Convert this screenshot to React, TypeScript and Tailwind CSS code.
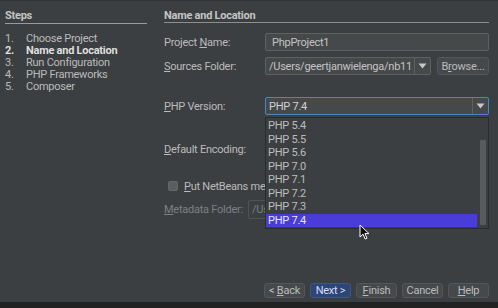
import React from "react";

// NetBeans "New PHP Project" wizard, step 2 (Darcula look-and-feel).

const steps = [
  { n: "1.", label: "Choose Project" },
  { n: "2.", label: "Name and Location", current: true },
  { n: "3.", label: "Run Configuration" },
  { n: "4.", label: "PHP Frameworks" },
  { n: "5.", label: "Composer" },
];

const versions = ["PHP 5.4", "PHP 5.5", "PHP 5.6", "PHP 7.0", "PHP 7.1", "PHP 7.2", "PHP 7.3", "PHP 7.4"];

// Label with one underlined mnemonic letter.
function Mn({ text, at }: { text: string; at: number }) {
  return (
    <>
      {text.slice(0, at)}
      <span className="underline underline-offset-1">{text[at]}</span>
      {text.slice(at + 1)}
    </>
  );
}

function Arrow() {
  return (
    <svg width="9" height="6" viewBox="0 0 9 6">
      <path d="M0.5 0.5 H8.5 L4.5 5.5 Z" fill="#c8c8c8" />
    </svg>
  );
}

function WizButton({ children, primary }: { children: React.ReactNode; primary?: boolean }) {
  return (
    <div
      className={`w-[41px] h-[15px] flex items-center justify-center rounded-[3px] border ${
        primary
          ? "bg-[#2d4674] border-[#3b5687] text-[#d6dcff]"
          : "bg-[#45494b] border-[#53575a] text-[#bbbbbb]"
      }`}
    >
      {children}
    </div>
  );
}

export default function App() {
  return (
    <div
      className="relative w-[498px] h-[308px] bg-[#3c3f41] flex flex-col text-[11px] leading-[13px] tracking-[-0.25px] text-[#bbbbbb] overflow-hidden"
      style={{ fontFamily: "Roboto, 'Liberation Sans', sans-serif" }}
    >
      <div className="h-px bg-[#323436]" />
      <div className="flex flex-1 min-h-0">
        {/* Steps */}
        <div className="w-[151px] shrink-0 pl-[5px] pr-[4px] pt-[8px]">
          <div className="font-bold text-[#c4c4c4]">Steps</div>
          <div className="h-px bg-[#9a9a9a] mt-[1px]" />
          <div className="mt-[8px] flex flex-col">
            {steps.map((s) => (
              <div key={s.n} className={`flex h-[12px] items-center ${s.current ? "font-bold text-[#dedede]" : ""}`}>
                <span className="w-[21px]">{s.n}</span>
                <span>{s.label}</span>
              </div>
            ))}
          </div>
        </div>

        {/* Name and Location */}
        <div className="flex-1 min-w-0 pl-[13px] pr-[9px] pt-[8px]">
          <div className="font-bold text-[#c4c4c4]">Name and Location</div>
          <div className="h-px bg-[#8e8e8e]" />

          <div className="mt-[10px] flex items-center h-[18px]">
            <span className="w-[101px] shrink-0">
              Project <Mn text="Name:" at={0} />
            </span>
            <div className="flex-1 h-[18px] bg-[#45494a] border border-[#5d6163] rounded-[2px] flex items-center px-[6px] text-[#c4c4c4]">
              PhpProject1
            </div>
          </div>

          <div className="mt-[6px] flex items-center h-[18px]">
            <span className="w-[101px] shrink-0">
              <Mn text="Sources Folder:" at={0} />
            </span>
            <div className="flex-1 min-w-0 h-[18px] bg-[#45494a] border border-[#5d6163] rounded-[2px] flex items-center">
              <span className="flex-1 min-w-0 px-[3px] overflow-hidden whitespace-nowrap text-[#c4c4c4]">
                /Users/geertjanwielenga/nb11
              </span>
              <div className="w-[16px] shrink-0 h-full border-l border-[#5d6163] flex items-center justify-center">
                <Arrow />
              </div>
            </div>
            <div className="ml-[6px] shrink-0 w-[52px] h-[18px] bg-[#45494b] border border-[#53575a] rounded-[3px] flex items-center justify-center">
              <Mn text="Browse..." at={1} />
            </div>
          </div>

          <div className="mt-[22px] flex items-center h-[18px]">
            <span className="w-[101px] shrink-0">
              <Mn text="PHP Version:" at={0} />
            </span>
            <div className="flex-1 h-[18px] bg-[#45494a] border border-[#4a86c7] rounded-[2px] flex items-center">
              <span className="flex-1 px-[3px] text-[#d2d2d2]">PHP 7.4</span>
              <div className="w-[16px] h-full border-l border-[#5d6163] flex items-center justify-center">
                <Arrow />
              </div>
            </div>
          </div>

          {/* rows below are partly covered by the open popup, so clip them at its edge */}
          <div className="mt-[25px] flex items-center h-[18px]">
            <span className="w-[101px] shrink-0">
              <Mn text="Default Encoding:" at={0} />
            </span>
          </div>

          <div className="mt-[21px] flex items-center h-[14px] pl-[4px] w-[101px] overflow-hidden">
            <div className="w-[10px] h-[10px] shrink-0 rounded-[2px] bg-[#5b5e60] border border-[#65686a]" />
            <span className="ml-[6px] whitespace-nowrap">
              <Mn text="Put NetBeans metadata into a separate directory" at={0} />
            </span>
          </div>

          <div className="mt-[7px] flex items-center h-[19px] w-[101px] overflow-hidden text-[#7c7f81]">
            <span className="w-[84px] shrink-0">
              <Mn text="Metadata Folder:" at={0} />
            </span>
            <div className="w-[40px] shrink-0 h-[19px] border border-[#4f5355] rounded-[2px] flex items-center px-[3px] overflow-hidden whitespace-nowrap">
              /Users
            </div>
          </div>
        </div>
      </div>

      {/* Wizard buttons */}
      <div className="flex justify-end gap-[5px] pr-[9px] pb-[4px]">
        <WizButton>
          &lt;&nbsp;<Mn text="Back" at={0} />
        </WizButton>
        <WizButton primary>Next &gt;</WizButton>
        <WizButton>
          <Mn text="Finish" at={0} />
        </WizButton>
        <WizButton>Cancel</WizButton>
        <WizButton>
          <Mn text="Help" at={0} />
        </WizButton>
      </div>
      <div className="h-[6px] bg-[#222222]" />

      {/* Open PHP version popup */}
      <div className="absolute left-[265px] top-[117px] w-[224px] h-[112px] bg-[#3c3f41] border border-[#2a2c2e] flex">
        <div className="flex-1 flex flex-col pt-px">
          {versions.map((v) => (
            <div
              key={v}
              className={`h-[13.5px] flex items-center pl-[2px] ${
                v === "PHP 7.4" ? "bg-[#4a3cd9] text-[#e4e4ff]" : "text-[#bdbdbd]"
              }`}
            >
              {v}
            </div>
          ))}
        </div>
        <div className="w-[11px] flex justify-center pt-[22px] pb-[3px]">
          <div className="w-[6px] h-full bg-[#595c5e] rounded-[1px]" />
        </div>
      </div>

      {/* Mouse pointer */}
      <svg className="absolute left-[359px] top-[224px]" width="12" height="16" viewBox="0 0 12 16">
        <path d="M1 1 L1 13 L4 10.2 L6.2 15 L8 14.2 L5.9 9.6 L10 9.6 Z" fill="#111" stroke="#fff" strokeWidth="1" strokeLinejoin="round" />
      </svg>
    </div>
  );
}
